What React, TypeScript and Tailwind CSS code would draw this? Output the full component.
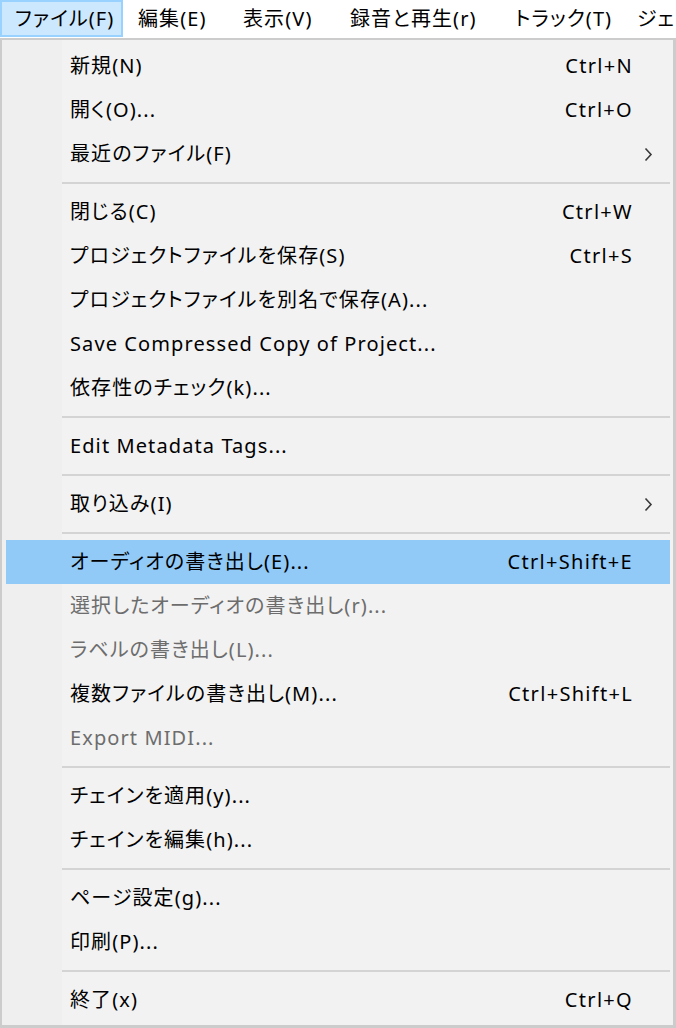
type Entry =
  | { kind: "item"; label: string; shortcut?: string; sub?: boolean; disabled?: boolean; active?: boolean }
  | { kind: "sep" };

const entries: Entry[] = [
  { kind: "item", label: "新規(N)", shortcut: "Ctrl+N" },
  { kind: "item", label: "開く(O)...", shortcut: "Ctrl+O" },
  { kind: "item", label: "最近のファイル(F)", sub: true },
  { kind: "sep" },
  { kind: "item", label: "閉じる(C)", shortcut: "Ctrl+W" },
  { kind: "item", label: "プロジェクトファイルを保存(S)", shortcut: "Ctrl+S" },
  { kind: "item", label: "プロジェクトファイルを別名で保存(A)..." },
  { kind: "item", label: "Save Compressed Copy of Project..." },
  { kind: "item", label: "依存性のチェック(k)..." },
  { kind: "sep" },
  { kind: "item", label: "Edit Metadata Tags..." },
  { kind: "sep" },
  { kind: "item", label: "取り込み(I)", sub: true },
  { kind: "sep" },
  { kind: "item", label: "オーディオの書き出し(E)...", shortcut: "Ctrl+Shift+E", active: true },
  { kind: "item", label: "選択したオーディオの書き出し(r)...", disabled: true },
  { kind: "item", label: "ラベルの書き出し(L)...", disabled: true },
  { kind: "item", label: "複数ファイルの書き出し(M)...", shortcut: "Ctrl+Shift+L" },
  { kind: "item", label: "Export MIDI...", disabled: true },
  { kind: "sep" },
  { kind: "item", label: "チェインを適用(y)..." },
  { kind: "item", label: "チェインを編集(h)..." },
  { kind: "sep" },
  { kind: "item", label: "ページ設定(g)..." },
  { kind: "item", label: "印刷(P)..." },
  { kind: "sep" },
  { kind: "item", label: "終了(x)", shortcut: "Ctrl+Q" },
];

// menu bar items with the widths seen in the screenshot
const menus = [
  { label: "ファイル(F)", cls: "w-[123px] pl-[13px] border-2 border-[#99d1ff] bg-[#cce8ff]" },
  { label: "編集(E)", cls: "w-[105px] pl-[15px]" },
  { label: "表示(V)", cls: "w-[107px] pl-[15px]" },
  { label: "録音と再生(r)", cls: "w-[165px] pl-[15px]" },
  { label: "トラック(T)", cls: "w-[122px] pl-[15px]" },
  { label: "ジェネレーター(G)", cls: "pl-[15px]" },
];

const Chevron = () => (
  <svg width="9" height="15" viewBox="0 0 9 15" fill="none">
    <path d="M1.5 1.5 L7 7.5 L1.5 13.5" stroke="#3a3a3a" strokeWidth="1.6" />
  </svg>
);

export default function App() {
  return (
    <div
      className="w-[676px] h-[1028px] overflow-hidden bg-white flex flex-col text-[20px] tracking-[1.1px] text-black [font-feature-settings:'palt']"
      style={{ fontFamily: '"Noto Sans", "Noto Sans CJK JP", sans-serif' }}
    >
      <div className="h-[38px] flex items-start whitespace-nowrap overflow-hidden">
        {menus.map((m) => (
          <div key={m.label} className={"h-[37px] flex items-center shrink-0 " + m.cls}>
            {m.label}
          </div>
        ))}
      </div>

      <div className="flex-1 flex flex-col border-l-2 border-t-2 border-r-[3px] border-b-[3px] border-[#cccccc] bg-[linear-gradient(to_right,#efefef_60px,#f2f2f2_60px)] pt-[4px]">
        {entries.map((e, i) =>
          e.kind === "sep" ? (
            <div key={i} className="h-[14px] flex items-center ml-[60px] mr-[3px]">
              <div className="h-[2px] w-full bg-[#d4d4d4]" />
            </div>
          ) : (
            <div
              key={i}
              className={
                "h-[44px] ml-[4px] mr-[3px] pl-[64px] flex items-center whitespace-nowrap " +
                (e.active ? "bg-[#91c9f7] " : "") +
                (e.disabled ? "text-[#6d6d6d]" : "text-black")
              }
            >
              <span className="flex-1">{e.label}</span>
              {e.shortcut && <span className="tracking-[1.3px]">{e.shortcut}</span>}
              <span className="w-[37px] shrink-0 flex items-center pl-[11px]">{e.sub && <Chevron />}</span>
            </div>
          )
        )}
      </div>
    </div>
  );
}
